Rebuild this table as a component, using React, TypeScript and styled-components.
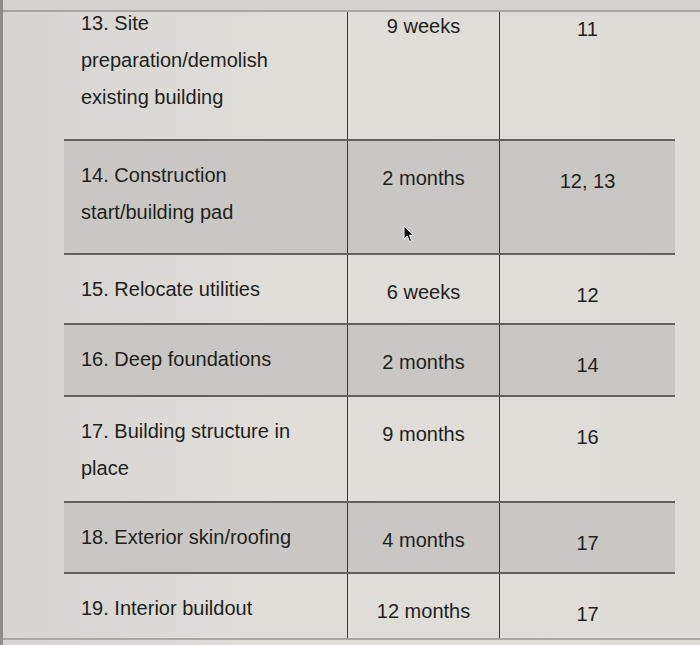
import React from 'react'
import styled, { createGlobalStyle } from 'styled-components'

const GlobalStyle = createGlobalStyle`
  html, body {
    margin: 0;
    padding: 0;
    background: #dcdbd7;
  }
  body {
    font-family: "Liberation Sans", Arial, sans-serif;
    color: #1f1f1d;
  }
`;

const Screen = styled.div`
  position: relative;
  width: 700px;
  height: 645px;
  overflow: hidden;
  background: linear-gradient(90deg, #d6d5d1 0%, #dfded9 40%, #dddcd7 100%);
  border-left: 3px solid #8e8d89;
  box-sizing: border-box;
`;

const HeaderStrip = styled.div`
  position: absolute;
  top: 0;
  left: 0;
  right: 0;
  height: 10px;
  background: #d4d3cf;
  border-bottom: 2px solid #a6a5a1;
  z-index: 2;
`;

const Sheet = styled.div`
  margin-top: -11px;
  padding-left: 61px;
  border-bottom: 2px solid #a9a8a4;
`;

const Table = styled.div`
  width: 611px;
  display: flex;
  flex-direction: column;
`;

const Row = styled.div<{ $h: number; $shade?: boolean; $first?: boolean }>`
  display: grid;
  grid-template-columns: 284px 152px 1fr;
  height: ${p => p.$h}px;
  box-sizing: border-box;
  background: ${p => (p.$shade ? '#c8c7c3' : 'transparent')};
  border-top: ${p => (p.$first ? 'none' : '2px solid #62615d')};
`;

const Cell = styled.div<{ $pad: number; $center?: boolean; $last?: boolean }>`
  position: relative;
  padding: ${p => p.$pad}px ${p => (p.$center ? 0 : 17)}px 0;
  text-align: ${p => (p.$center ? 'center' : 'left')};
  border-right: ${p => (p.$last ? 'none' : '1px solid #3a3a38')};
  font-size: 20px;
  line-height: 37px;
`;

const Cursor = styled.svg`
  position: absolute;
  left: 55px;
  top: 84px;
  width: 12px;
  height: 18px;
`;

type Item = {
  task: string[]
  duration: string
  deps: string
  h: number
  shade?: boolean
  cursor?: boolean
}

const items: Item[] = [
  { task: ['13. Site', 'preparation/demolish', 'existing building'], duration: '9 weeks', deps: '11', h: 150 },
  { task: ['14. Construction', 'start/building pad'], duration: '2 months', deps: '12, 13', h: 114, shade: true, cursor: true },
  { task: ['15. Relocate utilities'], duration: '6 weeks', deps: '12', h: 70 },
  { task: ['16. Deep foundations'], duration: '2 months', deps: '14', h: 72, shade: true },
  { task: ['17. Building structure in', 'place'], duration: '9 months', deps: '16', h: 106 },
  { task: ['18. Exterior skin/roofing'], duration: '4 months', deps: '17', h: 71, shade: true },
  { task: ['19. Interior buildout'], duration: '12 months', deps: '17', h: 66 },
]

const Pointer = () => (
  <Cursor viewBox="0 0 12 18">
    <path d="M1 1 L1 14 L4.2 11 L6.5 16.5 L8.6 15.6 L6.4 10.3 L10.6 10.3 Z" fill="#111" stroke="#f4f4f2" strokeWidth="1" strokeLinejoin="round" />
  </Cursor>
)

export default function App() {
  return (
    <>
      <GlobalStyle />
      <Screen>
        <HeaderStrip />
        <Sheet>
          <Table>
            {items.map((it, i) => (
              <Row key={it.task[0]} $h={it.h} $shade={it.shade} $first={i === 0}>
                <Cell $pad={16}>
                  {it.task.map(line => (
                    <div key={line}>{line}</div>
                  ))}
                </Cell>
                <Cell $pad={19} $center>
                  {it.duration}
                  {it.cursor && <Pointer />}
                </Cell>
                <Cell $pad={22} $center $last>
                  {it.deps}
                </Cell>
              </Row>
            ))}
          </Table>
        </Sheet>
      </Screen>
    </>
  )
}
